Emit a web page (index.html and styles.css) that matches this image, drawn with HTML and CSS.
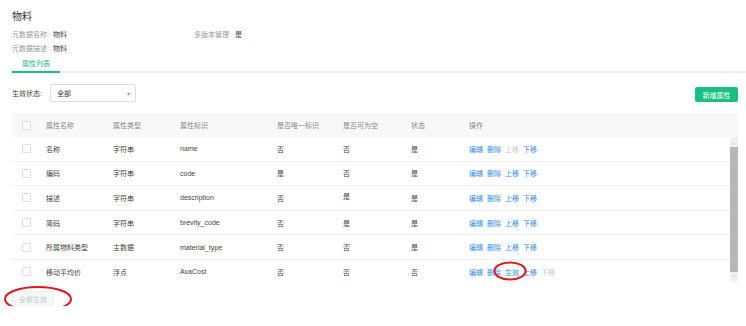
FILE: index.html
```html
<!DOCTYPE html>
<html lang="zh-CN">
<head>
    <meta charset="UTF-8">
    <meta name="viewport" content="width=device-width, initial-scale=1.0">
    <title>物料</title>
    <link rel="stylesheet" href="styles.css">
</head>
<body>
    <div class="page">
        <h1 class="title">物料</h1>
        <div class="meta">
            <div class="meta-item"><span class="label">元数据名称:</span><span class="value">物料</span></div>
            <div class="meta-item"><span class="label">多版本管理:</span><span class="value">是</span></div>
            <div class="meta-item"><span class="label">元数据描述:</span><span class="value">物料</span></div>
        </div>
        <div class="tabs">
            <span class="tab active">属性列表</span>
        </div>

        <div class="toolbar">
            <div class="filter">
                <span class="filter-label">生效状态:</span>
                <div class="select">
                    <span>全部</span>
                    <span class="arrow">▾</span>
                </div>
            </div>
            <button class="btn-primary">新增属性</button>
        </div>

        <div class="table">
            <div class="row head">
                <span><i class="checkbox"></i></span>
                <span>属性名称</span>
                <span>属性类型</span>
                <span>属性标识</span>
                <span>是否唯一标识</span>
                <span>是否可为空</span>
                <span>状态</span>
                <span>操作</span>
            </div>
            <div class="body">
                <div class="rows">
                    <div class="row">
                        <span><i class="checkbox"></i></span>
                        <span>名称</span><span>字符串</span><span>name</span>
                        <span>否</span><span>否</span><span>是</span>
                        <span class="actions"><a>编辑</a><a>删除</a><a class="off">上移</a><a>下移</a></span>
                    </div>
                    <div class="row">
                        <span><i class="checkbox"></i></span>
                        <span>编码</span><span>字符串</span><span>code</span>
                        <span>是</span><span>否</span><span>是</span>
                        <span class="actions"><a>编辑</a><a>删除</a><a>上移</a><a>下移</a></span>
                    </div>
                    <div class="row">
                        <span><i class="checkbox"></i></span>
                        <span>描述</span><span>字符串</span><span>description</span>
                        <span>否</span><span class="up">是</span><span>是</span>
                        <span class="actions"><a>编辑</a><a>删除</a><a>上移</a><a>下移</a></span>
                    </div>
                    <div class="row">
                        <span><i class="checkbox"></i></span>
                        <span>简码</span><span>字符串</span><span>brevity_code</span>
                        <span>否</span><span>是</span><span>是</span>
                        <span class="actions"><a>编辑</a><a>删除</a><a>上移</a><a>下移</a></span>
                    </div>
                    <div class="row">
                        <span><i class="checkbox"></i></span>
                        <span>所属物料类型</span><span>主数据</span><span>material_type</span>
                        <span>否</span><span>否</span><span>是</span>
                        <span class="actions"><a>编辑</a><a>删除</a><a>上移</a><a>下移</a></span>
                    </div>
                    <div class="row">
                        <span><i class="checkbox"></i></span>
                        <span>移动平均价</span><span>浮点</span><span>AvaCost</span>
                        <span>否</span><span>否</span><span>否</span>
                        <span class="actions"><a>编辑</a><a>删除</a><a>生效</a><a>上移</a><a class="off">下移</a></span>
                    </div>
                </div>
                <div class="scrollbar">
                    <span class="sb-btn">︿</span>
                    <span class="sb-thumb"></span>
                    <span class="sb-btn">﹀</span>
                </div>
            </div>
        </div>

        <button class="btn-disabled">全部生效</button>

        <!-- red marks drawn over the screenshot -->
        <svg class="mark mark-apply" width="34" height="20" viewBox="0 0 34 20">
            <ellipse cx="17" cy="10" rx="15.5" ry="8.5" fill="none" stroke="#e4151b" stroke-width="2"/>
        </svg>
        <svg class="mark mark-all" width="70" height="28" viewBox="0 0 70 28">
            <ellipse cx="35" cy="14" rx="33" ry="12" fill="none" stroke="#e4151b" stroke-width="2"/>
        </svg>
    </div>
</body>
</html>
```

FILE: styles.css
```css
body {
    margin: 0;
    background: #fff;
    font-family: "Liberation Sans", "Noto Sans CJK SC", sans-serif;
    font-size: 7px;
    color: #444;
}
.page {
    position: relative;
    padding: 10px 8px 0 12px;
}
.title {
    margin: 0;
    font-size: 10px;
    line-height: 14px;
    font-weight: normal;
    color: #333;
}
.meta {
    display: grid;
    grid-template-columns: 182px 1fr;
    margin-top: 4px;
}
.meta-item {
    line-height: 14px;
}
.label {
    color: #999;
    margin-right: 4px;
}
.value {
    color: #444;
}
.tabs {
    margin-right: -8px;
    border-bottom: 2px solid #ececec;
    height: 15px;
}
.tab {
    display: inline-block;
    padding: 0 10px;
    line-height: 14px;
    height: 15px;
    box-sizing: border-box;
}
.tab.active {
    color: #19be83;
    border-bottom: 2px solid #19be83;
    height: 17px;
    padding-top: 1px;
}
.toolbar {
    display: flex;
    justify-content: space-between;
    align-items: flex-end;
    margin-top: 11px;
}
.filter {
    display: flex;
    align-items: center;
}
.filter-label {
    color: #444;
    width: 38px;
}
.select {
    width: 86px;
    height: 18px;
    box-sizing: border-box;
    border: 1px solid #dcdee2;
    border-radius: 2px;
    display: flex;
    justify-content: space-between;
    align-items: center;
    padding: 0 5px 0 6px;
    color: #333;
}
.select .arrow {
    color: #999;
    font-size: 6px;
}
.btn-primary {
    font-family: inherit;
    font-size: 7px;
    color: #fff;
    background: #19be83;
    border: none;
    border-radius: 2px;
    width: 43px;
    height: 15px;
    padding: 0;
}
.table {
    margin-top: 11px;
}
.row {
    display: grid;
    grid-template-columns: 34px 67px 67px 97px 66px 68px 58px 1fr;
    align-items: center;
    height: 24.6px;
    box-sizing: border-box;
    border-bottom: 1px solid #f0f0f0;
}
.row > span:first-child {
    padding-left: 10px;
    display: flex;
}
.row.head {
    height: 24px;
    background: #f8f8f9;
    border-bottom: none;
    color: #888;
}
.body {
    display: flex;
    height: 145px;
}
.rows {
    flex: 1;
    overflow: hidden;
}
.checkbox {
    display: block;
    width: 7px;
    height: 7px;
    border: 1px solid #dcdee2;
    border-radius: 1px;
    background: #fff;
}
.up {
    position: relative;
    top: -2px;
}
.actions {
    display: flex;
    gap: 4px;
}
.actions a {
    color: #2d8cf0;
}
.actions a.off {
    color: #c5c8ce;
}
.scrollbar {
    width: 8px;
    background: #f1f1f1;
    display: flex;
    flex-direction: column;
}
.sb-btn {
    height: 10px;
    font-size: 5px;
    line-height: 10px;
    text-align: center;
    color: #999;
}
.sb-thumb {
    flex: 1;
    background: #b7b7b7;
}
.btn-disabled {
    display: block;
    margin-top: 9px;
    width: 42px;
    height: 15px;
    padding: 0;
    font-family: inherit;
    font-size: 7px;
    color: #c5c8ce;
    background: #f7f7f7;
    border: 1px solid #f0f0f0;
    border-radius: 2px;
}
.mark {
    position: absolute;
}
.mark-apply {
    left: 493px;
    top: 261px;
}
.mark-all {
    left: 3px;
    top: 285px;
}
```
